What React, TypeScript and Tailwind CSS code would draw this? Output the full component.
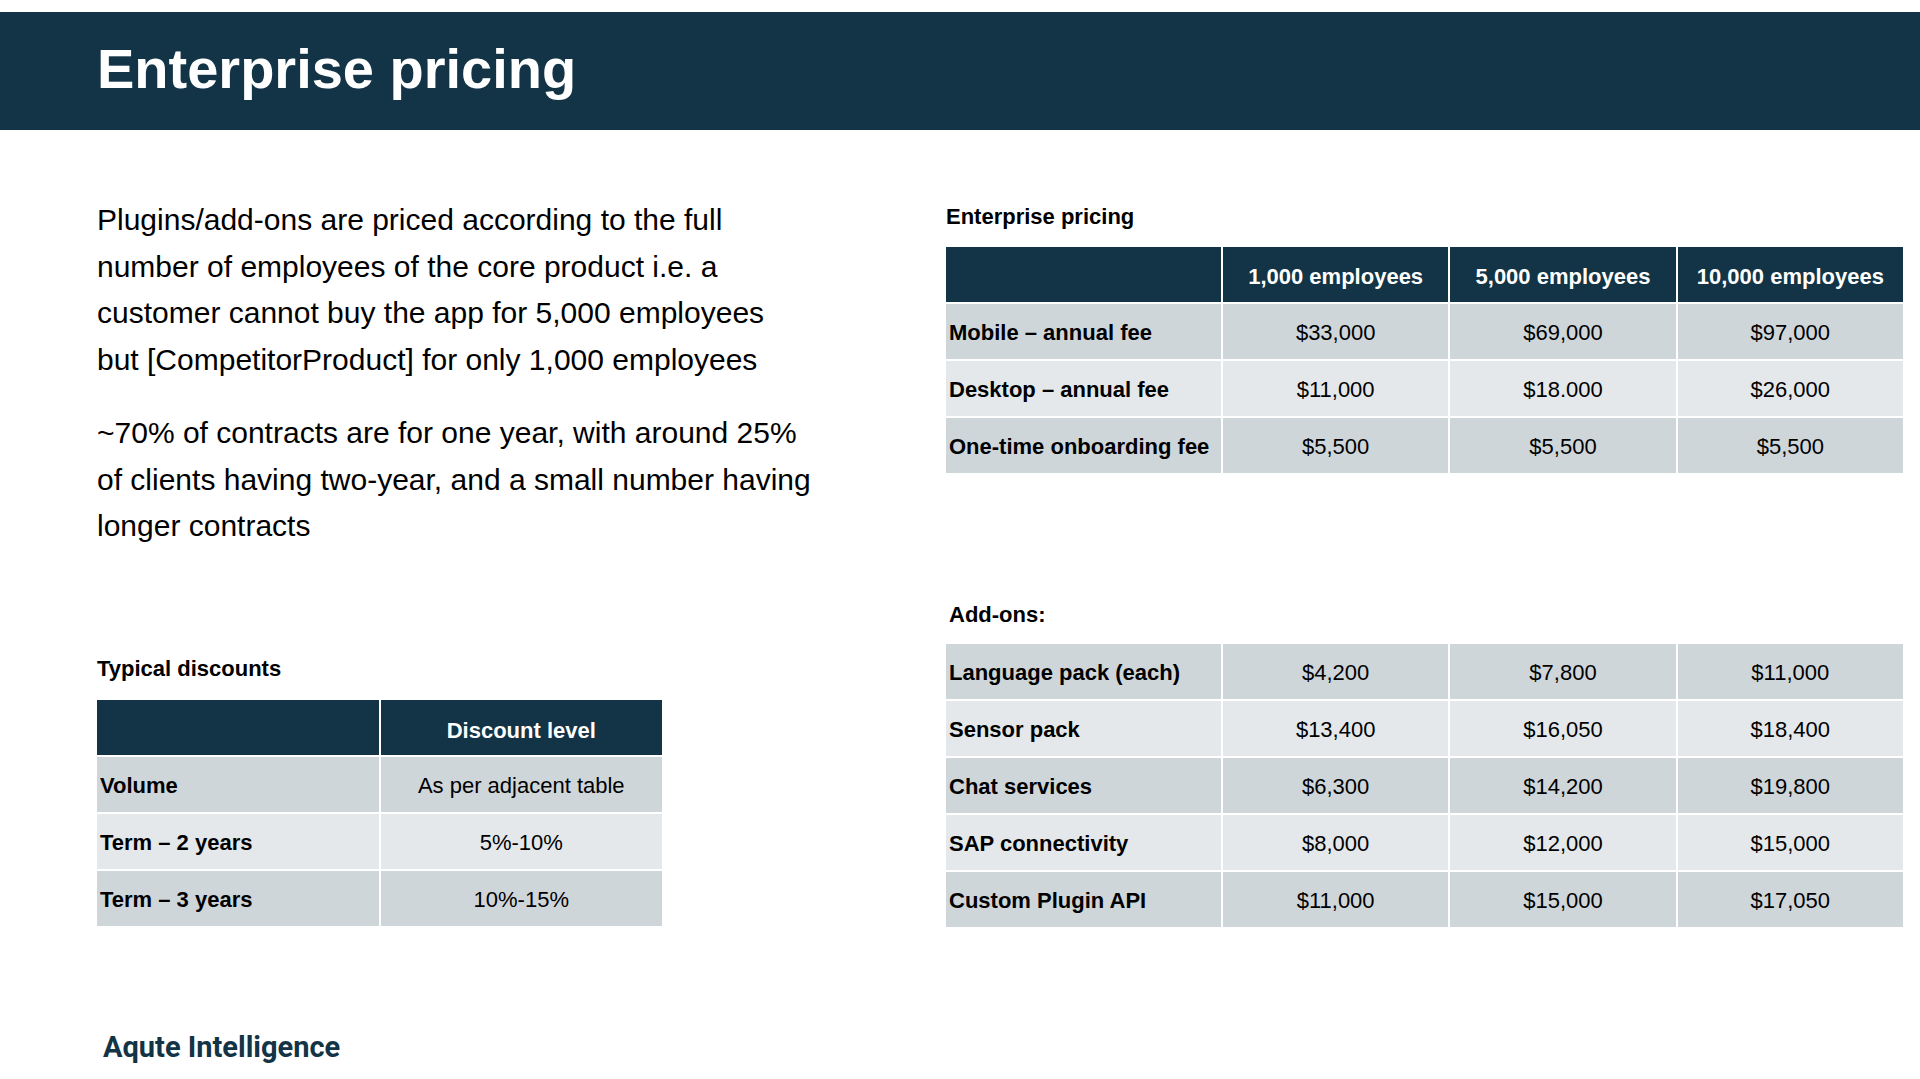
const navy = "bg-[#123446]";

const enterpriseRows = [
  ["Mobile – annual fee", "$33,000", "$69,000", "$97,000"],
  ["Desktop – annual fee", "$11,000", "$18.000", "$26,000"],
  ["One-time onboarding fee", "$5,500", "$5,500", "$5,500"],
];

const addOnRows = [
  ["Language pack (each)", "$4,200", "$7,800", "$11,000"],
  ["Sensor pack", "$13,400", "$16,050", "$18,400"],
  ["Chat services", "$6,300", "$14,200", "$19,800"],
  ["SAP connectivity", "$8,000", "$12,000", "$15,000"],
  ["Custom Plugin API", "$11,000", "$15,000", "$17,050"],
];

const discountRows = [
  ["Volume", "As per adjacent table"],
  ["Term – 2 years", "5%-10%"],
  ["Term – 3 years", "10%-15%"],
];

const rowBg = (i: number) => (i % 2 === 0 ? "bg-[#cfd6da]" : "bg-[#e4e8eb]");

const App = () => {
  return (
    <div className="w-[1920px] h-[1079px] bg-white overflow-hidden font-['Liberation_Sans',Arial,sans-serif] text-black">
      <div className="h-[12px]" />
      <header className={`${navy} h-[118px] flex items-center pl-[97px]`}>
        <h1 className="text-white font-bold text-[56px] leading-none pb-[4px]">Enterprise pricing</h1>
      </header>

      <div className="flex pl-[97px] pr-[17px]">
        {/* left column */}
        <div className="w-[849px] pt-[67px]">
          <div className="text-[30px] leading-[46.5px] whitespace-nowrap">
            <p>
              Plugins/add-ons are priced according to the full
              <br />
              number of employees of the core product i.e. a
              <br />
              customer cannot buy the app for 5,000 employees
              <br />
              but [CompetitorProduct] for only 1,000 employees
            </p>
            <p className="mt-[27px]">
              ~70% of contracts are for one year, with around 25%
              <br />
              of clients having two-year, and a small number having
              <br />
              longer contracts
            </p>
          </div>

          <h3 className="mt-[106px] font-bold text-[22px] leading-[26px]">Typical discounts</h3>
          <div className="mt-[18px] w-[565px] grid grid-cols-2 gap-[2px] text-[22px]">
            <div className={`${navy} h-[55px]`} />
            <div className={`${navy} h-[55px] flex items-center justify-center pt-[6px] text-white font-bold`}>
              Discount level
            </div>
            {discountRows.map((r, i) => (
              <div key={r[0]} className="contents">
                <div className={`${rowBg(i)} h-[55px] flex items-center pl-[3px] pt-[2px] font-bold`}>{r[0]}</div>
                <div className={`${rowBg(i)} h-[55px] flex items-center justify-center pt-[2px]`}>{r[1]}</div>
              </div>
            ))}
          </div>
        </div>

        {/* right column */}
        <div className="flex-1 pt-[74px]">
          <h3 className="font-bold text-[22px] leading-[26px]">Enterprise pricing</h3>
          <div className="mt-[17px] grid grid-cols-[275px_1fr_1fr_1fr] gap-[2px] text-[22px]">
            <div className={`${navy} h-[55px]`} />
            {["1,000 employees", "5,000 employees", "10,000 employees"].map((h) => (
              <div key={h} className={`${navy} h-[55px] flex items-center justify-center pt-[3px] text-white font-bold`}>
                {h}
              </div>
            ))}
            {enterpriseRows.map((r, i) => (
              <div key={r[0]} className="contents">
                {r.map((c, j) => (
                  <div
                    key={j}
                    className={`${rowBg(i)} h-[55px] flex items-center pt-[1px] ${j === 0 ? "pl-[3px] font-bold" : "justify-center"}`}
                  >
                    {c}
                  </div>
                ))}
              </div>
            ))}
          </div>

          <h3 className="mt-[129px] pl-[3px] font-bold text-[22px] leading-[26px]">Add-ons:</h3>
          <div className="mt-[16px] grid grid-cols-[275px_1fr_1fr_1fr] gap-[2px] text-[22px]">
            {addOnRows.map((r, i) => (
              <div key={r[0]} className="contents">
                {r.map((c, j) => (
                  <div
                    key={j}
                    className={`${rowBg(i)} h-[55px] flex items-center pt-[1px] ${j === 0 ? "pl-[3px] font-bold" : "justify-center"}`}
                  >
                    {c}
                  </div>
                ))}
              </div>
            ))}
          </div>
        </div>
      </div>

      <footer className="mt-[102px] pl-[103px]">
        <span className="font-['Roboto',sans-serif] font-bold text-[29px] leading-[36px] text-[#123446]">
          Aqute Intelligence
        </span>
      </footer>
    </div>
  );
};

export default App;
